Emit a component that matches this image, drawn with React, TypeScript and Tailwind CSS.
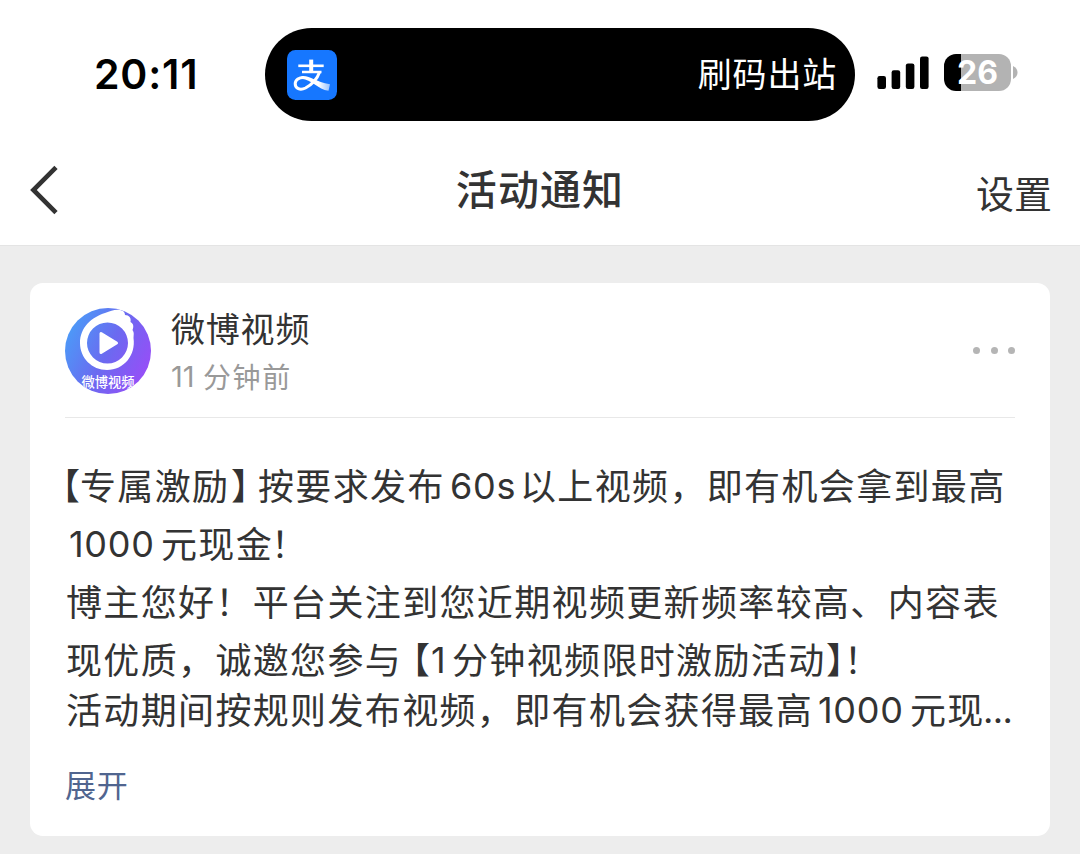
import React from "react";

const cjk = "font-['Noto_Sans_CJK_SC',sans-serif]";
const latin = "font-['Inter',sans-serif]";

function AlipayLogo() {
  return (
    <svg viewBox="0 0 50 50" className="h-[50px] w-[50px] shrink-0" aria-hidden="true">
      <defs>
        <linearGradient id="tail" x1="0" x2="1" y1="0" y2="0">
          <stop offset="0.6" stopColor="#fff" />
          <stop offset="1" stopColor="#fff" stopOpacity="0.55" />
        </linearGradient>
      </defs>
      <rect width="50" height="50" rx="8.5" fill="#1677ff" />
      <g fill="none" stroke="#fff">
        <path d="M11.3 15.8H36.7" strokeWidth="2.6" />
        <path d="M24.2 9.6V22" strokeWidth="4" />
        <path d="M15 22H34.5" strokeWidth="2.5" />
        <path d="M32.6 22C30.5 28 25 34.5 18.5 38C13 40.8 8.2 38.5 8.2 33.8C8.2 29.8 12.3 27.2 17 27.4" strokeWidth="3" />
      </g>
      <path d="M14.5 26C23 25 27.5 31.5 43 34.2L41.5 40.8C31 39.5 24.5 29.5 14.5 28.8Z" fill="url(#tail)" />
    </svg>
  );
}

function Signal() {
  return (
    <svg viewBox="0 0 52 34" className="h-[34px] w-[52px] shrink-0 fill-black" aria-hidden="true">
      <rect x="0.4" y="20" width="8.6" height="13" rx="2.2" />
      <rect x="14.6" y="14.3" width="8.6" height="18.7" rx="2.2" />
      <rect x="28.8" y="7.4" width="8.6" height="25.6" rx="2.2" />
      <rect x="43" y="0.4" width="8.6" height="32.6" rx="2.2" />
    </svg>
  );
}

function Battery() {
  return (
    <div className="flex items-center gap-[2px]">
      <div className="flex h-[37px] w-[67px] items-center justify-center rounded-[12px] bg-[linear-gradient(90deg,#000_17px,#b3b3b3_17px)]">
        <span className={`${latin} text-[32px] leading-none font-bold text-white`}>26</span>
      </div>
      <svg viewBox="0 0 5 13" className="h-[13px] w-[5px] fill-[#b3b3b3]" aria-hidden="true">
        <path d="M0 0C6 2.5 6 10.5 0 13Z" />
      </svg>
    </div>
  );
}

function StatusBar() {
  return (
    <div className="flex h-[121px] items-start pt-[28px]">
      <div className={`${latin} w-[265px] pl-[94px] text-[41px] leading-[93px] font-semibold tracking-[0.8px] text-black`}>
        20:11
      </div>
      <div className="flex h-[93px] w-[590px] items-center justify-between rounded-full bg-black pr-[18px] pl-[22px]">
        <AlipayLogo />
        <span className={`${cjk} pb-[3px] text-[34px] leading-none tracking-[0.8px] text-white`}>刷码出站</span>
      </div>
      <div className="flex h-[89px] items-center gap-[15px] pl-[22px]">
        <Signal />
        <Battery />
      </div>
    </div>
  );
}

function NavBar() {
  return (
    <header className="grid h-[124px] grid-cols-3 items-center pr-[28px] pl-[28px] text-[#333]">
      <svg viewBox="0 0 32 52" className="mt-[14px] h-[52px] w-[32px]" fill="none" stroke="#333" strokeWidth="4.6" aria-hidden="true">
        <path d="M28 3.4L5.4 26L28 48.6" />
      </svg>
      <h1 className={`${cjk} mt-[8px] text-center text-[41px] leading-none font-medium tracking-[1.1px]`}>活动通知</h1>
      <button className={`${cjk} mt-[18px] text-right text-[38px] leading-none`}>设置</button>
    </header>
  );
}

function Avatar() {
  return (
    <svg viewBox="0 0 86 86" className="h-[86px] w-[86px] shrink-0" aria-label="微博视频">
      <defs>
        <linearGradient id="disc" x1="0" x2="1" y1="0.25" y2="0.75">
          <stop offset="0" stopColor="#4a9df8" />
          <stop offset="0.5" stopColor="#6b6af0" />
          <stop offset="1" stopColor="#9a4cf8" />
        </linearGradient>
        <clipPath id="round">
          <circle cx="43" cy="43" r="43" />
        </clipPath>
      </defs>
      <g clipPath="url(#round)">
        <rect width="86" height="86" fill="url(#disc)" />
        <path
          fill="#fff"
          fillRule="evenodd"
          d="M15 35C15 19 27 9 40 5C46 3 50 1 55 2C59 2.500 60 5 60 7C64 7 66.500 10 65.500 14C68.500 15.500 69 18.500 67.500 22C69.500 24.500 68.500 27 68.500 30C71 47 59 62 42 62C27 62 15 50 15 35ZM22 35A20.500 20.500 0 1 0 63 35A20.500 20.500 0 1 0 22 35Z"
        />
        <path d="M36 25.500V44.500L51.500 35Z" fill="#fff" stroke="#fff" strokeWidth="3" strokeLinejoin="round" />
        <text x="43" y="78.800" textAnchor="middle" fill="#fff" fontSize="13.300" className="font-['Noto_Sans_CJK_SC',sans-serif] font-medium">
          微博视频
        </text>
      </g>
    </svg>
  );
}

type Run = { text: string; className: string };

const digits = "pt-[2px] font-['Inter',sans-serif] tracking-[0.7px]";
const bracket = "[font-feature-settings:'halt'] tracking-normal";

const lines: { className: string; runs: Run[] }[] = [
  {
    className: "h-[58px]",
    runs: [
      { text: "【", className: `-ml-[3px] w-[18px] ${bracket}` },
      { text: "专属激励", className: "w-[151px]" },
      { text: "】", className: `w-[27px] ${bracket}` },
      { text: "按要求发布", className: "w-[192px]" },
      { text: "60s", className: `w-[70px] ${digits}` },
      { text: "以上视频，即有机会拿到最高", className: "" },
    ],
  },
  {
    className: "h-[58px]",
    runs: [
      { text: "1000", className: `ml-[4px] w-[92px] ${digits}` },
      { text: "元现金", className: "w-[110px]" },
      { text: "！", className: "" },
    ],
  },
  {
    className: "h-[58px]",
    runs: [{ text: "博主您好！平台关注到您近期视频更新频率较高、内容表", className: "ml-[1px]" }],
  },
  {
    className: "h-[50px]",
    runs: [
      { text: "现优质，诚邀您参与", className: "ml-[1px] w-[346px]" },
      { text: "【", className: `w-[19px] ${bracket}` },
      { text: "1", className: `w-[21px] ${digits}` },
      { text: "分钟视频限时激励活动", className: "w-[374px]" },
      { text: "】", className: `w-[18px] ${bracket}` },
      { text: "！", className: "" },
    ],
  },
  {
    className: "h-[54px]",
    runs: [
      { text: "活动期间按规则发布视频，即有机会获得最高", className: "ml-[1px] w-[752px]" },
      { text: "1000", className: `w-[92px] ${digits}` },
      { text: "元现", className: "w-[73px]" },
      { text: "...", className: "pt-[2px] font-['Inter',sans-serif] tracking-[-0.6px]" },
    ],
  },
];

function NoticeCard() {
  return (
    <article className="h-[553px] rounded-[13px] bg-white px-[35px] pt-[25px]">
      <div className="flex h-[110px] items-start border-b border-[#e8e8e8]">
        <Avatar />
        <div className="ml-[20px] flex-1">
          <div className={`${cjk} -mt-[2px] text-[34px] leading-[44px] tracking-[0.8px] text-[#333]`}>微博视频</div>
          <div className="mt-[4px] flex text-[28px] leading-[44px] text-[#999]">
            <span className={`${latin} w-[32px] pt-[1px] text-[29px]`}>11</span>
            <span className={`${cjk} tracking-[1.6px]`}>分钟前</span>
          </div>
        </div>
        <div className="mt-[39px] flex gap-[10.5px]">
          <span className="h-[7px] w-[7px] rounded-full bg-[#b5b5b5]" />
          <span className="h-[7px] w-[7px] rounded-full bg-[#b5b5b5]" />
          <span className="h-[7px] w-[7px] rounded-full bg-[#b5b5b5]" />
        </div>
      </div>
      <div className={`${cjk} pt-[37px] text-[36px] tracking-[1.35px] whitespace-nowrap text-[#333]`}>
        {lines.map((line, i) => (
          <div key={i} className={`flex leading-[58px] ${line.className}`}>
            {line.runs.map((run, j) => (
              <span key={j} className={`shrink-0 ${run.className}`}>
                {run.text}
              </span>
            ))}
          </div>
        ))}
      </div>
      <button className={`${cjk} mt-[31px] block text-[31px] leading-[40px] tracking-[0.8px] text-[#50658f]`}>展开</button>
    </article>
  );
}

export default function App() {
  return (
    <div className="h-[854px] w-[1080px] overflow-hidden bg-[#ededed]">
      <div className="h-[246px] border-b border-[#e4e4e4] bg-white">
        <StatusBar />
        <NavBar />
      </div>
      <main className="px-[30px] pt-[37px]">
        <NoticeCard />
      </main>
    </div>
  );
}
